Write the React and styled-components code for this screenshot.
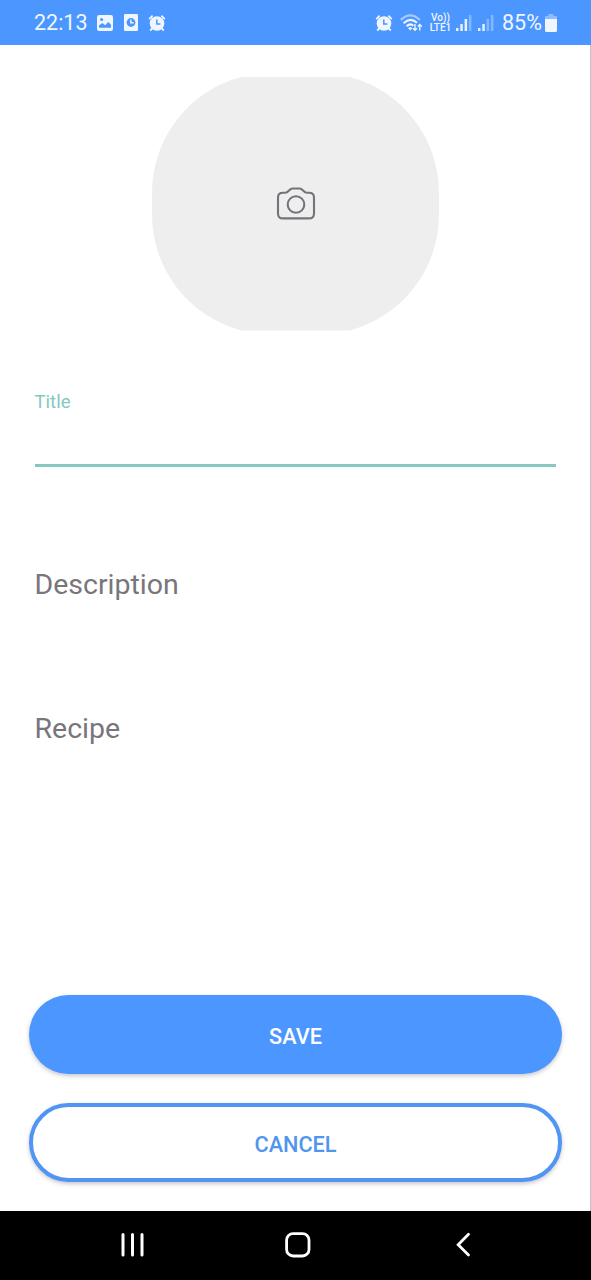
import React from "react";
import styled, { createGlobalStyle } from "styled-components";

const Global = createGlobalStyle`
  * { box-sizing: border-box; }
  body { margin: 0; font-family: Roboto, "Liberation Sans", sans-serif; background: #fff; }
`;

const Screen = styled.div`
  display: flex;
  flex-direction: column;
  width: 591px;
  height: 1280px;
  background: #fff;
`;

const StatusBar = styled.header`
  display: flex;
  justify-content: space-between;
  flex: none;
  height: 45px;
  padding: 0 34px;
  background: #4b96ff;
  color: #eff6ff;
`;

const StatusGroup = styled.div`
  display: flex;
  align-items: center;
  height: 45px;
`;

const StatusText = styled.span`
  font-size: 21.5px;
  line-height: 45px;
  width: ${(p) => p.$width}px;
  margin-left: ${(p) => p.$gap || 0}px;
  white-space: nowrap;
`;

const StatusIcon = styled.svg`
  display: block;
  flex: none;
  margin-left: ${(p) => p.$gap || 0}px;
`;

const Network = styled.div`
  display: flex;
  flex-direction: column;
  align-items: center;
  width: 23px;
  margin-left: 5px;
  font-size: 10px;
  line-height: 10px;
  font-weight: 500;
  white-space: nowrap;
`;

const Content = styled.main`
  display: flex;
  flex-direction: column;
  flex: 1;
  border-right: 1px solid #c4c4c8;
  padding: 32px 28px 29px 29px;
`;

const PhotoPicker = styled.button`
  display: block;
  align-self: center;
  width: 287px;
  height: 254px;
  padding: 0;
  border: 0;
  background: none;
`;

const Form = styled.section`
  display: flex;
  flex-direction: column;
  padding: 0 6px 0 5.5px;
`;

const Field = styled.label`
  display: block;
  height: ${(p) => p.$height}px;
  margin-top: ${(p) => p.$top}px;
  color: ${(p) => (p.$active ? "#84c8bf" : "#78757b")};
  border-bottom: ${(p) => (p.$active ? "3px solid #84c8bf" : "0")};
  font-size: ${(p) => (p.$active ? 18.6 : 28.5)}px;
  line-height: ${(p) => (p.$active ? 24 : 36)}px;
`;

const Actions = styled.div`
  display: flex;
  flex-direction: column;
  gap: 29px;
  margin-top: auto;
`;

const Button = styled.button`
  height: 79px;
  padding: 4px 0 0;
  border: ${(p) => (p.$outlined ? "4px solid #5095f4" : "0")};
  border-radius: 40px;
  background: ${(p) => (p.$outlined ? "#fff" : "#4b96ff")};
  color: ${(p) => (p.$outlined ? "#5095ee" : "#fff")};
  font: 500 21.7px Roboto, "Liberation Sans", sans-serif;
  box-shadow: 0 2px 4px rgba(60, 50, 80, 0.28);
`;

const NavBar = styled.nav`
  display: flex;
  align-items: center;
  justify-content: center;
  flex: none;
  gap: 137px;
  height: 69px;
  padding: 0 0 2px 4px;
  background: #000;
`;

function Alarm({ gap }) {
  return (
    <StatusIcon $gap={gap} width="18" height="18" viewBox="0 0 18 18" fill="none">
      <circle cx="9" cy="9.5" r="7.3" fill="#eff6ff" />
      <path d="M1.2 5.2 4.6 1.7M16.8 5.2l-3.4-3.5M4.2 14.5l-2 2M13.8 14.5l2 2" stroke="#eff6ff" strokeWidth="1.8" />
      <path d="M8.8 5.5v4.6h3.6" stroke="#4b96ff" strokeWidth="1.5" />
    </StatusIcon>
  );
}

function Signal({ gap, level }) {
  return (
    <StatusIcon $gap={gap} width="16" height="17" viewBox="0 0 16 17" fill="#eff6ff">
      {[3, 7, 12, 16].map((h, i) => (
        <rect key={h} x={i * 4.3} y={17 - h} width="2.5" height={h} opacity={i < level ? 0.95 : 0.35} />
      ))}
    </StatusIcon>
  );
}

export default function App() {
  return (
    <Screen>
      <Global />
      <StatusBar>
        <StatusGroup>
          <StatusText $width={54}>22:13</StatusText>
          <StatusIcon $gap={9} width="16" height="16" viewBox="0 0 16 16">
            <rect width="16" height="16" rx="2.2" fill="#eff6ff" />
            <path d="M2 12.8v-2.3L5.3 8l2.8 2.3L11.3 7 14 9.8v3z" fill="#4b96ff" />
            <circle cx="4.6" cy="4.6" r="1.5" fill="#4b96ff" />
          </StatusIcon>
          <StatusIcon $gap={11} width="14" height="17" viewBox="0 0 14 17" fill="none">
            <rect width="14" height="17" rx="1.2" fill="#eff6ff" />
            <circle cx="7" cy="8.5" r="4.4" fill="#4b96ff" />
            <path d="M6.8 5.5v3.3h2.8" stroke="#eff6ff" strokeWidth="1.4" />
          </StatusIcon>
          <Alarm gap={10} />
        </StatusGroup>
        <StatusGroup>
          <Alarm />
          <StatusIcon $gap={7} width="24" height="18" viewBox="0 0 24 18" fill="none" stroke="#eff6ff" strokeWidth="2">
            <path d="M.8 6Q10.3-3.2 19.8 6" opacity=".55" />
            <path d="M3.6 9.2Q10.3 2.8 17 8.8M6.6 12.3q3.7-3.5 6.8-.6" />
            <path d="m8 14.2 2.3-1.4 2 1.4-2 2.2z" fill="#eff6ff" stroke="none" />
            <path d="M15 10v6.2m-2-2 2 2 2-2M19.8 16.5v-6m-2 2 2-2 2 2" strokeWidth="1.4" />
          </StatusIcon>
          <Network>
            <span>Vo))</span>
            <span>LTE1</span>
          </Network>
          <Signal gap={4} level={3} />
          <Signal gap={6} level={2} />
          <StatusText $gap={8} $width={40}>85%</StatusText>
          <StatusIcon $gap={3} width="12" height="18" viewBox="0 0 12 18" fill="#eff6ff">
            <path d="M3.5 0h5v2H11q1 0 1 1v2H0V3q0-1 1-1h2.5z" opacity=".4" />
            <path d="M0 5h12v11.5q0 1.5-1.5 1.5h-9Q0 18 0 16.5z" />
          </StatusIcon>
        </StatusGroup>
      </StatusBar>
      <Content>
        <PhotoPicker aria-label="Add photo">
          <svg width="287" height="254" viewBox="0 0 287 254" fill="none">
            <path d="M89 0H198A120 120 0 0 1 287 115V138A120 120 0 0 1 198 253.4H89A120 120 0 0 1 0 138V115A120 120 0 0 1 89 0Z" fill="#eee" />
            <g stroke="#75737a" strokeWidth="2.1">
              <path d="M131 115.7h2c3.8 0 4.2-4.2 7.4-4.2h7.2c3.2 0 3.8 4.2 7.4 4.2h2c3.2 0 5 1.8 5 4.7v16c0 3.2-1.8 5-5 5h-26c-3.2 0-5-1.8-5-5v-16c0-2.9 1.8-4.7 5-4.7z" />
              <circle cx="144" cy="127.5" r="8.3" />
            </g>
          </svg>
        </PhotoPicker>
        <Form>
          <Field $active $top={59} $height={77}>Title</Field>
          <Field $top={100} $height={36}>Description</Field>
          <Field $top={108} $height={36}>Recipe</Field>
        </Form>
        <Actions>
          <Button>SAVE</Button>
          <Button $outlined>CANCEL</Button>
        </Actions>
      </Content>
      <NavBar>
        <svg width="28" height="28" viewBox="0 0 28 28" stroke="#fff" strokeWidth="3" strokeLinecap="round">
          <path d="M4 3.5v20.500M13.500 3.500v20.500M23 3.500v20.500" />
        </svg>
        <svg width="28" height="28" viewBox="0 0 28 28" fill="none" stroke="#fff" strokeWidth="2.8">
          <rect x="2.6" y="2.6" width="22.4" height="22.4" rx="6.5" />
        </svg>
        <svg width="28" height="28" viewBox="0 0 28 28" fill="none" stroke="#fff" strokeWidth="2.8" strokeLinecap="round">
          <path d="M19.5 3.3 9.200 13.700 19.500 24" />
        </svg>
      </NavBar>
    </Screen>
  );
}
